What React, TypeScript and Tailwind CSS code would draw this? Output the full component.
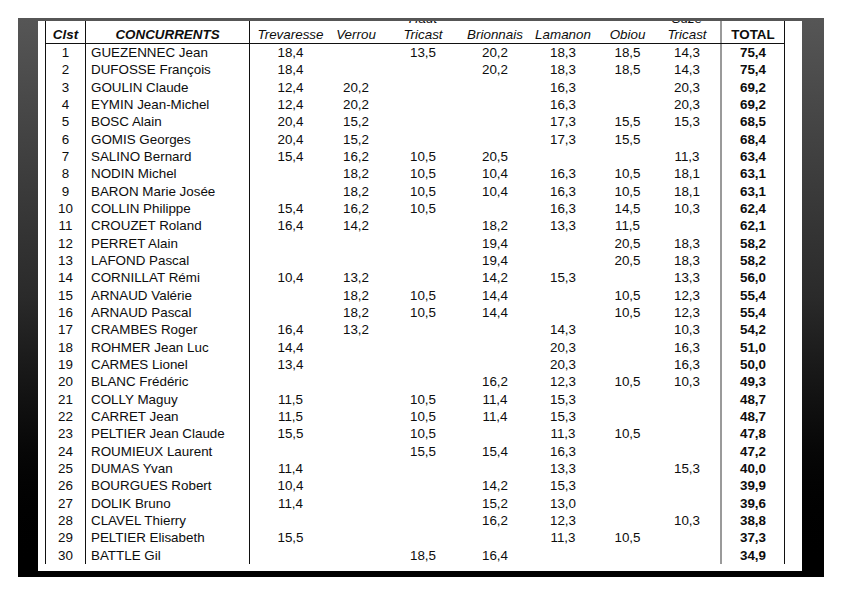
type Row = [string, string, string, string, string, string, string, string, string];

const rows: Row[] = [
    ["GUEZENNEC Jean", "18,4", "", "13,5", "20,2", "18,3", "18,5", "14,3", "75,4"],
    ["DUFOSSE François", "18,4", "", "", "20,2", "18,3", "18,5", "14,3", "75,4"],
    ["GOULIN Claude", "12,4", "20,2", "", "", "16,3", "", "20,3", "69,2"],
    ["EYMIN Jean-Michel", "12,4", "20,2", "", "", "16,3", "", "20,3", "69,2"],
    ["BOSC Alain", "20,4", "15,2", "", "", "17,3", "15,5", "15,3", "68,5"],
    ["GOMIS Georges", "20,4", "15,2", "", "", "17,3", "15,5", "", "68,4"],
    ["SALINO Bernard", "15,4", "16,2", "10,5", "20,5", "", "", "11,3", "63,4"],
    ["NODIN Michel", "", "18,2", "10,5", "10,4", "16,3", "10,5", "18,1", "63,1"],
    ["BARON Marie Josée", "", "18,2", "10,5", "10,4", "16,3", "10,5", "18,1", "63,1"],
    ["COLLIN Philippe", "15,4", "16,2", "10,5", "", "16,3", "14,5", "10,3", "62,4"],
    ["CROUZET Roland", "16,4", "14,2", "", "18,2", "13,3", "11,5", "", "62,1"],
    ["PERRET Alain", "", "", "", "19,4", "", "20,5", "18,3", "58,2"],
    ["LAFOND Pascal", "", "", "", "19,4", "", "20,5", "18,3", "58,2"],
    ["CORNILLAT Rémi", "10,4", "13,2", "", "14,2", "15,3", "", "13,3", "56,0"],
    ["ARNAUD Valérie", "", "18,2", "10,5", "14,4", "", "10,5", "12,3", "55,4"],
    ["ARNAUD Pascal", "", "18,2", "10,5", "14,4", "", "10,5", "12,3", "55,4"],
    ["CRAMBES Roger", "16,4", "13,2", "", "", "14,3", "", "10,3", "54,2"],
    ["ROHMER Jean Luc", "14,4", "", "", "", "20,3", "", "16,3", "51,0"],
    ["CARMES Lionel", "13,4", "", "", "", "20,3", "", "16,3", "50,0"],
    ["BLANC Frédéric", "", "", "", "16,2", "12,3", "10,5", "10,3", "49,3"],
    ["COLLY Maguy", "11,5", "", "10,5", "11,4", "15,3", "", "", "48,7"],
    ["CARRET Jean", "11,5", "", "10,5", "11,4", "15,3", "", "", "48,7"],
    ["PELTIER Jean Claude", "15,5", "", "10,5", "", "11,3", "10,5", "", "47,8"],
    ["ROUMIEUX Laurent", "", "", "15,5", "15,4", "16,3", "", "", "47,2"],
    ["DUMAS Yvan", "11,4", "", "", "", "13,3", "", "15,3", "40,0"],
    ["BOURGUES Robert", "10,4", "", "", "14,2", "15,3", "", "", "39,9"],
    ["DOLIK Bruno", "11,4", "", "", "15,2", "13,0", "", "", "39,6"],
    ["CLAVEL Thierry", "", "", "", "16,2", "12,3", "", "10,3", "38,8"],
    ["PELTIER Elisabeth", "15,5", "", "", "", "11,3", "10,5", "", "37,3"],
    ["BATTLE Gil", "", "", "18,5", "16,4", "", "", "", "34,9"],
];

const cols = "grid grid-cols-[40px_164px_82px_50px_84px_60px_76px_53px_66px_65px]";

function Head({ top, label, className = "" }: { top?: string, label: string, className?: string }) {
    return (
        <div className={`flex flex-col justify-end items-center italic leading-[16px] ${className}`}>
            {top && <span>{top}</span>}
            <span>{label}</span>
        </div>
    )
}

export default function App() {
    return (
        <div className="w-[842px] h-[595px] bg-white pt-[18px] pl-[18px] font-['Liberation_Sans',Arial,sans-serif] text-[13.4px] text-[#0d0d0d]">
            <div className="w-[806px] h-[559px] bg-gradient-to-b from-[#565656] via-[#2a2a2a] to-[#000] pt-[3px] pl-[20px] pr-[22px] pb-[6px]">
                <div className="h-full bg-white overflow-hidden pl-[7px]">
                    <div className="-mt-[16px] w-[740px]">
                        <div className={`${cols} h-[39px] border-b border-[#111]`}>
                            <div className="border-l border-[#111] flex items-end justify-center font-bold italic leading-[16px]">Clst</div>
                            <div className="border-l border-[#111] flex items-end justify-center font-bold italic leading-[16px]">CONCURRENTS</div>
                            <Head label="Trevaresse" className="border-l border-[#111]" />
                            <Head label="Verrou" />
                            <Head top="Haut" label="Tricast" />
                            <Head label="Brionnais" />
                            <Head label="Lamanon" />
                            <Head label="Obiou" />
                            <Head top="Suze" label="Tricast" />
                            <div className="border-l-2 border-r border-l-[#9a9a9a] border-r-[#111] flex items-end justify-center font-bold leading-[16px]">TOTAL</div>
                        </div>
                        {rows.map((r, i) => (
                            <div key={i} className={`${cols} h-[17.34px] leading-[17.34px]`}>
                                <div className="border-l border-[#111] text-center">{i + 1}</div>
                                <div className="border-l border-[#111] pl-[5px] whitespace-nowrap">{r[0]}</div>
                                <div className="border-l border-[#111] text-center">{r[1]}</div>
                                <div className="text-center">{r[2]}</div>
                                <div className="text-center">{r[3]}</div>
                                <div className="text-center">{r[4]}</div>
                                <div className="text-center">{r[5]}</div>
                                <div className="text-center">{r[6]}</div>
                                <div className="text-center">{r[7]}</div>
                                <div className="border-l-2 border-r border-l-[#9a9a9a] border-r-[#111] text-center font-bold">{r[8]}</div>
                            </div>
                        ))}
                    </div>
                </div>
            </div>
        </div>
    )
}
